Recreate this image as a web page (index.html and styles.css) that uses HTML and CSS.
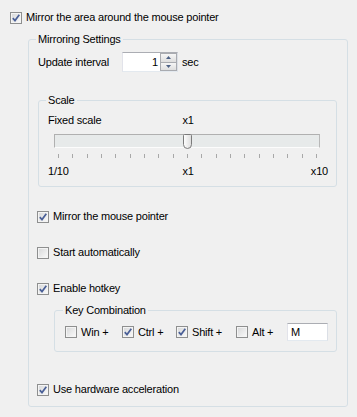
FILE: index.html
```html
<!DOCTYPE html>
<html lang="en">
<head>
    <meta charset="UTF-8">
    <title>Mirroring Settings</title>
    <link rel="stylesheet" href="styles.css">
</head>
<body>
    <div class="check top">
        <span class="cb on"><svg viewBox="0 0 10 10"><path d="M1.8 5.1 L4 7.6 L8.3 1.8"/></svg></span>
        <span>Mirror the area around the mouse pointer</span>
    </div>

    <fieldset class="group group-main">
        <legend>Mirroring Settings</legend>
        <div class="main-body">
            <div class="interval">
                <span class="interval-label">Update interval</span>
                <div class="spin">
                    <span class="spin-val">1</span>
                    <div class="spin-btns">
                        <span class="spin-btn"><svg viewBox="0 0 5 3"><path d="M0 3 L2.5 0 L5 3 Z"/></svg></span>
                        <span class="spin-btn"><svg viewBox="0 0 5 3"><path d="M0 0 L5 0 L2.5 3 Z"/></svg></span>
                    </div>
                </div>
                <span class="sec">sec</span>
            </div>

            <fieldset class="group group-scale">
                <legend>Scale</legend>
                <div class="scale-body">
                    <div class="scale-row">
                        <span>Fixed scale</span>
                        <span>x1</span>
                    </div>
                    <div class="track">
                        <svg class="thumb" viewBox="0 0 9 15">
                            <defs>
                                <linearGradient id="tg" x1="0" y1="0" x2="1" y2="0">
                                    <stop offset="0" stop-color="#ffffff"/>
                                    <stop offset="1" stop-color="#dcdcdc"/>
                                </linearGradient>
                            </defs>
                            <path d="M0.5 1.5 Q0.5 0.5 1.5 0.5 H7.5 Q8.5 0.5 8.5 1.5 V10.5 Q8.5 14.5 4.5 14.5 Q0.5 14.5 0.5 10.5 Z"/>
                        </svg>
                    </div>
                    <div class="ticks">
                        <i></i><i></i><i></i><i></i><i></i><i></i><i></i><i></i><i></i><i></i>
                        <i></i><i></i><i></i><i></i><i></i><i></i><i></i><i></i><i></i>
                    </div>
                    <div class="scale-row scale-labels">
                        <span>1/10</span>
                        <span>x1</span>
                        <span class="end">x10</span>
                    </div>
                </div>
            </fieldset>

            <div class="check opt first">
                <span class="cb on"><svg viewBox="0 0 10 10"><path d="M1.8 5.1 L4 7.6 L8.3 1.8"/></svg></span>
                <span>Mirror the mouse pointer</span>
            </div>
            <div class="check opt">
                <span class="cb"></span>
                <span>Start automatically</span>
            </div>
            <div class="check opt">
                <span class="cb on"><svg viewBox="0 0 10 10"><path d="M1.8 5.1 L4 7.6 L8.3 1.8"/></svg></span>
                <span>Enable hotkey</span>
            </div>

            <fieldset class="group group-keys">
                <legend>Key Combination</legend>
                <div class="keys-body">
                    <div class="check">
                        <span class="cb"></span>
                        <span>Win +</span>
                    </div>
                    <div class="check">
                        <span class="cb on"><svg viewBox="0 0 10 10"><path d="M1.8 5.1 L4 7.6 L8.3 1.8"/></svg></span>
                        <span>Ctrl +</span>
                    </div>
                    <div class="check">
                        <span class="cb on"><svg viewBox="0 0 10 10"><path d="M1.8 5.1 L4 7.6 L8.3 1.8"/></svg></span>
                        <span>Shift +</span>
                    </div>
                    <div class="check">
                        <span class="cb"></span>
                        <span>Alt +</span>
                    </div>
                    <div class="key-input">M</div>
                </div>
            </fieldset>

            <div class="check opt last">
                <span class="cb on"><svg viewBox="0 0 10 10"><path d="M1.8 5.1 L4 7.6 L8.3 1.8"/></svg></span>
                <span>Use hardware acceleration</span>
            </div>
        </div>
    </fieldset>
</body>
</html>
```

FILE: styles.css
```css
* {
    box-sizing: border-box;
}

body {
    margin: 0;
    background: #f0f0f0;
    color: #000;
    font-family: "Liberation Sans", Arial, sans-serif;
    font-size: 11px;
    line-height: 13px;
    letter-spacing: -0.2px;
}

/* checkboxes */
.check {
    display: flex;
    align-items: center;
    gap: 4px;
    height: 13px;
    white-space: nowrap;
}
.top {
    margin: 11px 0 0 10px;
}
.cb {
    flex: none;
    width: 12px;
    height: 12px;
    border: 1px solid #8e8f8f;
    background: linear-gradient(135deg, #d6d7d8, #fbfbfb);
    box-shadow: inset 0 0 0 1px #f4f4f4;
    display: flex;
    align-items: center;
    justify-content: center;
}
.cb svg {
    width: 10px;
    height: 10px;
}
.cb path {
    fill: none;
    stroke: #4a5f97;
    stroke-width: 1.7;
}

/* group boxes */
.group {
    margin: 0;
    padding: 0;
    min-width: 0;
    border: 1px solid #d5dfe5;
    border-radius: 3px;
}
.group legend {
    margin-left: 7px;
    padding: 0 2px;
    line-height: 13px;
}
.group-main {
    margin: 9px 0 0 28px;
    width: 320px;
}
.main-body {
    padding: 6px 10px 10px 9px;
}

/* update interval */
.interval {
    display: flex;
    align-items: center;
    height: 20px;
}
.interval-label {
    width: 84px;
}
.spin {
    display: flex;
    width: 56px;
    height: 20px;
    border: 1px solid;
    border-color: #abadb3 #dbdfe6 #e3e9ef #e2e3ea;
    background: #fff;
}
.spin-val {
    flex: 1;
    text-align: right;
    padding-right: 2px;
    line-height: 18px;
}
.spin-btns {
    width: 17px;
    display: flex;
    flex-direction: column;
}
.spin-btn {
    flex: 1;
    border: 1px solid #a9abb0;
    background: linear-gradient(#f6f6f6, #dedede);
    display: flex;
    align-items: center;
    justify-content: center;
}
.spin-btn + .spin-btn {
    border-top: none;
}
.spin-btn svg {
    width: 5px;
    height: 3px;
    fill: #4d6185;
}
.sec {
    margin-left: 4px;
}

/* scale */
.group-scale {
    margin-top: 22px;
}
.scale-body {
    padding: 7px 8px 8px 9px;
}
.scale-row {
    display: grid;
    grid-template-columns: 1fr auto 1fr;
}
.scale-labels {
    margin-top: 7px;
}
.scale-labels .end {
    justify-self: end;
}
.track {
    position: relative;
    height: 14px;
    margin: 7px 8px 0 6px;
    border: 1px solid;
    border-color: #b0b0b0 #b8b8b8 #fcfcfc #b0b0b0;
    background: #e7eaea;
}
.thumb {
    position: absolute;
    left: 128px;
    top: -1px;
    width: 9px;
    height: 15px;
}
.thumb path {
    fill: url(#tg);
    stroke: #7b7b7b;
    stroke-width: 1;
}
.ticks {
    display: flex;
    justify-content: space-between;
    height: 4px;
    margin: 6px 11px 0 10px;
}
.ticks i {
    width: 1px;
    background: #a8a8a8;
}

/* options */
.opt {
    margin: 23px 0 0 -1px;
}
.opt.last {
    margin-top: 31px;
}

/* key combination */
.group-keys {
    margin: 9px 0 0 16px;
}
.group-keys legend {
    margin-left: 8px;
}
.keys-body {
    display: grid;
    grid-template-columns: 57px 54px 60px 51px 41px;
    align-items: center;
    height: 34px;
    padding: 6px 0 10px 10px;
}
.key-input {
    height: 18px;
    border: 1px solid;
    border-color: #abadb3 #dbdfe6 #e3e9ef #e2e3ea;
    background: #fff;
    padding-left: 3px;
    line-height: 16px;
}
```
